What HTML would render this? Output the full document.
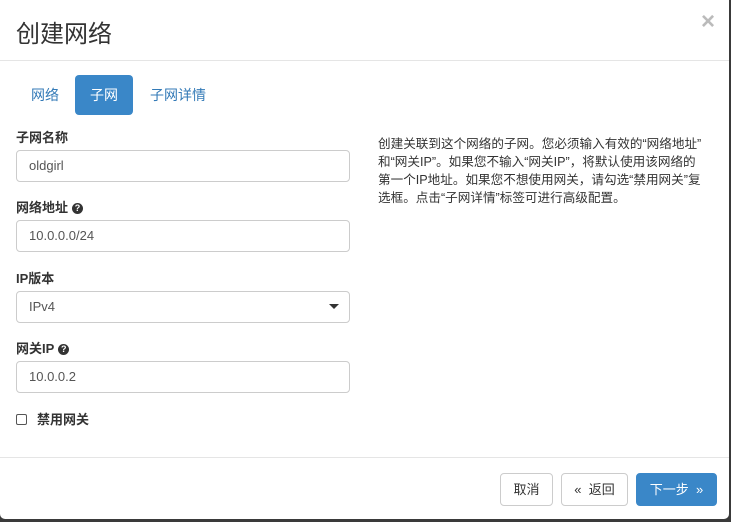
<!DOCTYPE html><html><head><meta charset="utf-8"><style>
body{margin:0;width:731px;height:522px;background:#3a3a3a;font-family:"Liberation Sans","Noto Sans CJK SC",sans-serif;overflow:hidden}
.m{position:absolute;left:0;top:0;width:729px;height:519px;background:#fff;border-radius:0 0 5px 5px}
.t{position:absolute;left:16px;top:14px;font-size:24px;color:#333}
.x{position:absolute;right:14px;top:8px;font-size:24px;color:#bbb;font-weight:bold}
.hr{position:absolute;left:0;right:0;height:1px;background:#e5e5e5}
.tab{position:absolute;top:75px;height:40px;line-height:40px;font-size:14px;color:#337ab7;padding:0 15px;border-radius:4px}
.tab.a{background:#3a87c8;color:#fff}
.l{position:absolute;left:16px;font-size:13px;font-weight:bold;color:#333}
.i{position:absolute;left:16px;width:320px;height:30px;border:1px solid #ccc;border-radius:4px;padding-left:12px;line-height:30px;font-size:13px;color:#555}
.q{display:inline-block;width:11px;height:11px;border-radius:50%;background:#333;color:#fff;font-size:9px;text-align:center;line-height:11px;vertical-align:middle;margin-left:4px}
.d{position:absolute;left:378px;top:135px;width:345px;font-size:12.6px;line-height:18px;color:#333;white-space:nowrap}
.b{position:absolute;top:473px;height:31px;line-height:31px;border:1px solid #ccc;border-radius:4px;font-size:13px;color:#333;text-align:center;background:#fff}
</style></head><body><div class="m">
<div class="t">创建网络</div><div class="x">×</div>
<div class="hr" style="top:60px"></div>
<div class="tab" style="left:16px">网络</div>
<div class="tab a" style="left:75px">子网</div>
<div class="tab" style="left:135px">子网详情</div>
<div class="l" style="top:127px">子网名称</div>
<div class="i" style="top:150px">oldgirl</div>
<div class="l" style="top:197px">网络地址<span class="q">?</span></div>
<div class="i" style="top:220px">10.0.0.0/24</div>
<div class="l" style="top:268px">IP版本</div>
<div class="i" style="top:291px">IPv4<span style="position:absolute;right:10px;top:12px;border:5px solid transparent;border-top-color:#333;border-bottom:0"></span></div>
<div class="l" style="top:338px">网关IP<span class="q">?</span></div>
<div class="i" style="top:361px">10.0.0.2</div>
<div class="l" style="top:409px"><span style="display:inline-block;width:9px;height:9px;border:1px solid #555;border-radius:2px;margin-right:10px;vertical-align:-1px"></span>禁用网关</div>
<div class="d">创建关联到这个网络的子网。您必须输入有效的“网络地址”<br>和“网关IP”。如果您不输入“网关IP”，将默认使用该网络的<br>第一个IP地址。如果您不想使用网关，请勾选“禁用网关”复<br>选框。点击“子网详情”标签可进行高级配置。</div>
<div class="hr" style="top:457px"></div>
<div class="b" style="left:500px;width:51px">取消</div>
<div class="b" style="left:561px;width:65px">«&nbsp; 返回</div>
<div class="b" style="left:636px;width:79px;background:#3a87c8;border-color:#3a87c8;color:#fff">下一步 &nbsp;»</div>
</div></body></html>
